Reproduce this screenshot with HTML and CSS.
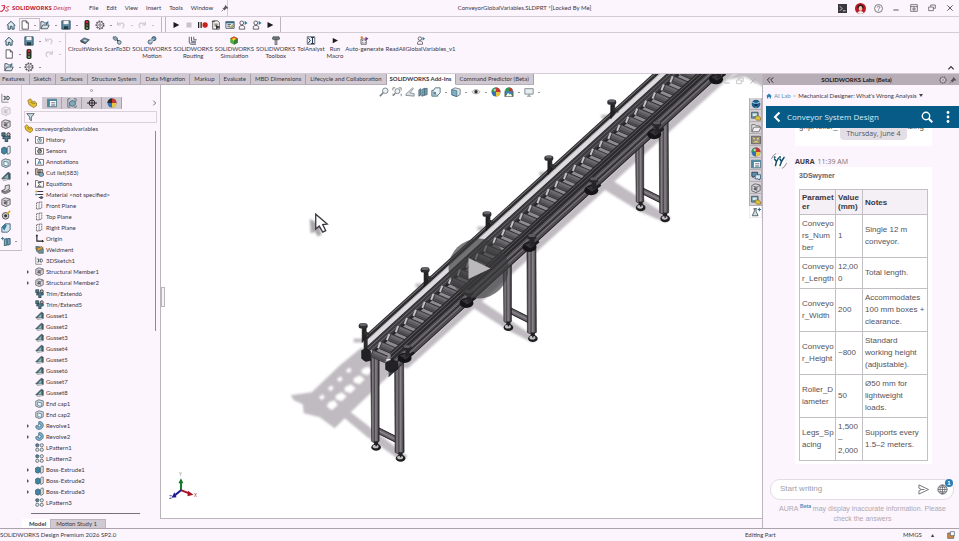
FILE: index.html
```html
<!DOCTYPE html>
<html lang="en">
<head>
<meta charset="utf-8">
<title>SOLIDWORKS Design</title>
<link rel="stylesheet" href="styles.css">
</head>
<body>
<svg class="sprite" aria-hidden="true">
  <defs>
    <symbol id="home" viewBox="0 0 12 12"><path d="M1 6.5 6 1.5l5 5M2.500 6v5h2.700V7.500h2v3.500h2.500V6" fill="#dceaf0" stroke="#2f4f60" stroke-width="1.200"/></symbol>
    <symbol id="page" viewBox="0 0 12 12"><path d="M2.500 1h5L10 3.500V11H2.500zM7.500 1v2.500H10" fill="#fff" stroke="#444" /></symbol>
    <symbol id="open" viewBox="0 0 12 12"><path d="M1 10.500V2h3l1 1.500h3V6M1 10.500 3.500 6H11l-2 4.500z" fill="#d9e2e8" stroke="#3b4a55"/><path d="M7 3.500 10 1v4z" fill="#257a9c"/></symbol>
    <symbol id="save" viewBox="0 0 12 12"><path d="M1 1h10v10H1z" fill="#5d8ba1" stroke="#2d4a5a"/><path d="M3 1h6v4H3z" fill="#f4f4f4"/><path d="M3.500 7.500h5V11h-5z" fill="#223845"/></symbol>
    <symbol id="light" viewBox="0 0 12 12"><rect x="3" y="0" width="6" height="12" rx="2" fill="#2c2a2a"/><circle cx="6" cy="2.500" r="1.500" fill="#d5302c"/><circle cx="6" cy="6" r="1.300" fill="#6a6335"/><circle cx="6" cy="9.500" r="1.400" fill="#49a34c"/></symbol>
    <symbol id="gear" viewBox="0 0 12 12"><circle cx="6" cy="6" r="4.500" fill="none" stroke="#5a565c" stroke-width="1.800" stroke-dasharray="2 1.140"/><circle cx="6" cy="6" r="3.700" fill="#fbf5fc" stroke="#5a565c" stroke-width=".8"/><circle cx="6" cy="6" r="1.500" fill="none" stroke="#5a565c"/></symbol>
    <symbol id="undo" viewBox="0 0 12 12"><path d="M2 2v4h4M2 6c2-3.500 8-3 7.500 1.200L8 10" fill="none" stroke="#cfc8d0" stroke-width="1.300"/></symbol>
    <symbol id="redo" viewBox="0 0 12 12"><path d="M10 2v4H6M10 6C8 2.500 2 3 2.500 7.200L4 10" fill="none" stroke="#cfc8d0" stroke-width="1.300"/></symbol>
    <symbol id="play" viewBox="0 0 12 12"><path d="M3 2.500 10 6 3 9.500z" fill="#1d1b1e"/></symbol>
    <symbol id="stop" viewBox="0 0 12 12"><path d="M3 3h6v6H3z" fill="#c8c2ca"/></symbol>
    <symbol id="record" viewBox="0 0 12 12"><path d="M0 2.500h1.500v7H0zM3 2.500h1.500v7H3z" fill="#222"/><circle cx="8.500" cy="6" r="3.200" fill="#cb1f1a"/></symbol>
    <symbol id="macro-new" viewBox="0 0 12 12"><path d="M2 1h6l2 2v8H2z" fill="#f3f0e8" stroke="#444"/><path d="M1 2h4M4 5h4M4 7h3" stroke="#444"/><path d="m6 6 5 2.500L6 11z" fill="#333"/></symbol>
    <symbol id="macro-edit" viewBox="0 0 12 12"><path d="M1 2h10v8H1z" fill="#e4eef3" stroke="#3a5567"/><path d="M1 2h10v2H1z" fill="#3a6d88"/><path d="M3 5.500h4M3 7.500h3" stroke="#444"/><path d="m6 9 4-4 1.500 1.500-4 4z" fill="#cba24e" stroke="#555" stroke-width=".5"/></symbol>
    <symbol id="person" viewBox="0 0 12 12"><circle cx="4.500" cy="3.500" r="2.300" fill="none" stroke="#4c4850"/><path d="M1.500 11V8.500C1.500 6 8 6 8 8.500V11z" fill="none" stroke="#4c4850"/><path d="m8 1 3.500 2.500L8 6z" fill="#2f7c97"/></symbol>
    <symbol id="circuit" viewBox="0 0 12 12"><path d="m0 6 5-3.500 7 2.500-5 5z" fill="#607f90" stroke="#29414e" stroke-width=".8"/><path d="m3.500 6 2-1.500 3 1.200-2 1.800z" fill="#c9dde4"/><path d="M0 6v2l7 3V10" fill="#333"/></symbol>
    <symbol id="scan" viewBox="0 0 12 12"><path d="M1 1h4l2 3-3 2-3-2z" fill="#8aa7b4" stroke="#2c4552" stroke-width=".8"/><path d="m6 5 2 2" stroke="#222" stroke-width="1.500"/><circle cx="9" cy="8.500" r="2.500" fill="#b5cbd3" stroke="#2c4552"/></symbol>
    <symbol id="motion" viewBox="0 0 12 12"><circle cx="3.500" cy="8" r="2.800" fill="#9cc6d8" stroke="#345"/><circle cx="8.500" cy="3.500" r="2.800" fill="#5d91aa" stroke="#345"/><path d="m4 8 4.500-4.500" stroke="#fff" stroke-width="1.200"/></symbol>
    <symbol id="routing" viewBox="0 0 12 12"><path d="M1 1v7c0 2 1 3 3 3h6M4 1v6h6M7 1v4h4M3 9h7" fill="none" stroke="#4b5660" stroke-width="1.200"/></symbol>
    <symbol id="simulation" viewBox="0 0 12 12"><path d="m1 3 5-2.500L11 3v6l-5 2.500L1 9z" fill="#4caf3f"/><path d="M1 3 6 .5 11 3 6 6z" fill="#e0352b"/><path d="m3 4 3-2 3 2-3 3z" fill="#f4cf29"/><path d="M6 6v5.500L11 9V3z" fill="#3a7d38"/></symbol>
    <symbol id="toolbox" viewBox="0 0 12 12"><path d="M2 1h8l1 3-2 1H3L1 4z" fill="#6b7980" stroke="#262c30" stroke-width=".7"/><path d="M4.700 5h2.600v7H4.700z" fill="#aab4b9" stroke="#333" stroke-width=".7"/></symbol>
    <symbol id="tol" viewBox="0 0 12 12"><path d="M1 1h10v10H1z" fill="#eef3f5" stroke="#3d4a52"/><path d="M8 2v8M6 2h4M6 10h4M2 2l3 4-3 4" stroke="#235" fill="none" stroke-width="1.300"/></symbol>
    <symbol id="auto" viewBox="0 0 12 12"><path d="M2 4h7v7H2z" fill="#eee" stroke="#444"/><path d="M3.500 6H5m2 0h1M3.500 9H5m2 0h1" stroke="#335"/><circle cx="3" cy="2" r="1.600" fill="#e07d2c"/><path d="m8 1 4 2.500L8 6z" fill="#6e2c87"/></symbol>
    <symbol id="pin" viewBox="0 0 12 12"><path d="m6 1 5 5-1 1-1.500-.5L6 8.500 6 10 2 6l1.500.2L6 3.500z" fill="#59535c"/><path d="m4 8-3 3" stroke="#59535c"/></symbol>
    <symbol id="mag" viewBox="0 0 12 12"><circle cx="7.500" cy="4.500" r="3.300" fill="#e8f0f3" stroke="#6f7a80"/><path d="m5 7-4 4" stroke="#6f7a80" stroke-width="1.800"/></symbol>
    <symbol id="magbox" viewBox="0 0 12 12"><path d="M1 4V1h3M8 1h3v3M11 8v3M1 8v1" stroke="#777" fill="none"/><circle cx="6.500" cy="5" r="3" fill="#edf3f5" stroke="#6f7a80"/><path d="m4 7.500-3 3" stroke="#6f7a80" stroke-width="1.600"/></symbol>
    <symbol id="brush" viewBox="0 0 12 12"><path d="M1 10c0-3 3-4 4-5l4-4 1 1-4 5 5 1v3z" fill="#d7dfe3" stroke="#7c868c"/></symbol>
    <symbol id="section" viewBox="0 0 12 12"><path d="M1 3.500 3 2v8L1 11zM4.500 3 8 1.500V10l-3.500 1zM8 2l3-.5V9l-3 1" fill="#74a1b5" stroke="#3c5665" stroke-width=".8"/></symbol>
    <symbol id="views" viewBox="0 0 12 12"><path d="M1 4h7v7H1z" fill="#b9d0da" stroke="#4a6675"/><path d="m3 4 2-3h6v6L8 10" fill="#ecf2f5" stroke="#4a6675"/><path d="M3 6h3v3H3z" fill="#5a8aa0"/></symbol>
    <symbol id="cube" viewBox="0 0 12 12"><path d="m1 3 4-2 6 1.500V9l-4 2.500L1 9.500z" fill="#dfe6e9" stroke="#5a6b74" stroke-width=".9"/><path d="m1 3 6 1.500v7L1 9.500z" fill="#7db0c6" stroke="#3f6576" stroke-width=".8"/></symbol>
    <symbol id="greycube" viewBox="0 0 12 12"><path d="m1 3 4-2 6 1.500V9l-5 2.500L1 9.500z" fill="#d8d5d9" stroke="#5d5a60"/><path d="m3 4 4 1v5M7 5l3.500-2" fill="none" stroke="#5d5a60"/><circle cx="5" cy="7" r="1.800" fill="#63606a"/></symbol>
    <symbol id="endcap" viewBox="0 0 12 12"><path d="m1 3 4-2 6 1.500V9l-5 2.500L1 9.500z" fill="#c9dbe3" stroke="#5d6468"/><path d="m3.500 4 5 1v5l-5-1.500z" fill="#f6f8f9" stroke="#4f7f94"/></symbol>
    <symbol id="eye" viewBox="0 0 12 12"><path d="M1 6c2.500-4 7.500-4 10 0-2.500 3-7.500 3-10 0z" fill="#e6e6e8" stroke="#aaa6ae"/><circle cx="6" cy="5.700" r="2" fill="#333"/></symbol>
    <symbol id="ball" viewBox="0 0 12 12"><circle cx="6" cy="6" r="5.400" fill="#3270b8"/><path d="M6 6V.6A5.400 5.400 0 0 1 11.400 6z" fill="#c9362d"/><path d="M6 6h5.400A5.400 5.400 0 0 1 6 11.400z" fill="#e8c63b"/><path d="M6 6H.6A5.400 5.400 0 0 1 6 .6z" fill="#37984a"/><circle cx="4.500" cy="3.500" r="1.500" fill="#fff" opacity=".6"/></symbol>
    <symbol id="darkball" viewBox="0 0 12 12"><use href="#ball"/><path d="M6 6H.6A5.400 5.400 0 0 1 6 .6z" fill="#2e2931"/></symbol>
    <symbol id="scene" viewBox="0 0 12 12"><path d="M1 5h10v6.500H1z" fill="#5b7a56" stroke="#3e3e3e" stroke-width=".6"/><circle cx="6" cy="5" r="4.500" fill="#3f7fb9"/><path d="M6 5V.5A4.500 4.500 0 0 1 10.500 5z" fill="#c9362d"/><path d="M6 5H1.500A4.500 4.500 0 0 1 6 .5z" fill="#37984a"/><path d="m2 11 3-4 2 2 1-1 2 3z" fill="#efe"/></symbol>
    <symbol id="monitor" viewBox="0 0 12 12"><path d="M1 2h10v6.500H1z" fill="#e7eef1" stroke="#757b80"/><path d="M6 8.500V11M3.500 11h5" stroke="#757b80"/></symbol>
    <symbol id="part" viewBox="0 0 12 12"><path d="M1 3 4 1l2 2v2l3-1 2.500 2v3L8 11.500 2.500 8z" fill="#e9c232" stroke="#7a5f14" stroke-width=".8"/><path d="M4 4.500 7 7l3.500-1" fill="none" stroke="#8b6d19" stroke-width=".8"/></symbol>
    <symbol id="props" viewBox="0 0 12 12"><path d="M.5 1.500h11v9H.5z" fill="#fff" stroke="#3c6a80"/><path d="M.5 1.500h11v2H.5zM.5 3h3v7.500h-3z" fill="#4f87a0"/><path d="M5 5.500h5M5 7.500h5M5 9.300h5" stroke="#456" stroke-width=".8"/></symbol>
    <symbol id="config" viewBox="0 0 12 12"><path d="M4 1H1v10h3M8 1h3v3M11 9v2H8" fill="none" stroke="#4c6773"/><path d="m3 5 3-2 4 1v4l-3 2-4-1z" fill="#7fa9bc" stroke="#334e5b" stroke-width=".8"/></symbol>
    <symbol id="cross" viewBox="0 0 12 12"><circle cx="6" cy="6" r="3.500" fill="none" stroke="#28262a" stroke-width="1.200"/><path d="M6 0v12M0 6h12" stroke="#28262a" stroke-width="1.200"/></symbol>
    <symbol id="filter" viewBox="0 0 12 12"><path d="M1 1.500h10L7.200 6v5L5 9.500V6z" fill="#c6dbe4" stroke="#444c52"/></symbol>
    <symbol id="folder" viewBox="0 0 12 12"><path d="M.7 11V2h3l1 1.300h6.600V11z" fill="#fff" stroke="#4f4b52"/></symbol>
    <symbol id="history" viewBox="0 0 12 12"><use href="#folder"/><circle cx="6" cy="7" r="2.500" fill="none" stroke="#356a80"/><path d="M6 5.500V7h1.500" stroke="#333" fill="none"/></symbol>
    <symbol id="sensors" viewBox="0 0 12 12"><use href="#folder"/><circle cx="6" cy="7" r="2.600" fill="#aaa" stroke="#333"/><path d="m6 7 2-2" stroke="#111"/></symbol>
    <symbol id="annot" viewBox="0 0 12 12"><use href="#folder"/><path d="m3.700 10 2.300-5.500 2.300 5.500M4.700 8h2.600" fill="none" stroke="#2b6c95" stroke-width="1.100"/></symbol>
    <symbol id="sigma" viewBox="0 0 12 12"><use href="#folder"/><path d="M8.200 5.500V4.700H3.900L6 7.200 3.900 9.700h4.300V9" fill="none" stroke="#333"/></symbol>
    <symbol id="cut" viewBox="0 0 12 12"><path d="M.7 9V1h3l1 1h5.500v7z" fill="#cbb9a4" stroke="#4f4b52"/><path d="M3 4h5M3 6h5" stroke="#333"/><path d="m5 7 3-1.500L11.500 7v3L8.500 11.700 5 10z" fill="#7fa4b5" stroke="#334" stroke-width=".7"/></symbol>
    <symbol id="material" viewBox="0 0 12 12"><path d="M3 2h8M3 6h8M5 10h6" stroke="#3a383c" stroke-width="1.300"/><circle cx="1.500" cy="2" r="1.200" fill="#caa236"/><circle cx="1.500" cy="6" r="1.200" fill="#4485a3"/><circle cx="8.500" cy="10" r="2" fill="#555"/></symbol>
    <symbol id="plane" viewBox="0 0 12 12"><path d="m2 2.500 7-1.500v8.500L2 11z" fill="#fdf9fd" stroke="#56525a" stroke-dasharray="2.500 .8"/><path d="M5.500 1v10" stroke="#56525a" stroke-width=".7"/></symbol>
    <symbol id="origin" viewBox="0 0 12 12"><path d="M2.500 1v8.500H11" fill="none" stroke="#222" stroke-width="1.500"/><path d="m.8 3 1.700-2.500L4.200 3zM9.500 7.800 12 9.500l-2.500 1.700z" fill="#222"/></symbol>
    <symbol id="weld" viewBox="0 0 12 12"><path d="M1 2h4l6 3v6H5L2 8z" fill="#6f93a4" stroke="#384b55" stroke-width=".8"/><path d="m1 5 8-3 2 2-6 4z" fill="#d1a141" stroke="#5d4720" stroke-width=".7"/></symbol>
    <symbol id="sketch3d" viewBox="0 0 12 12"><path d="M1 1v10h8" fill="none" stroke="#777"/><path d="M3 4h2v4H3M4 6h1M7 4v4h1.500c2 0 2-4 0-4z" fill="none" stroke="#29363d"/></symbol>
    <symbol id="trim" viewBox="0 0 12 12"><path d="M1 1h4v4H1zM3 5h8v3H8v4H5V8H2z" fill="#4e7f93" stroke="#22353e" stroke-width=".9"/><circle cx="9" cy="3" r="2" fill="#bbb" stroke="#222"/></symbol>
    <symbol id="gusset" viewBox="0 0 12 12"><path d="m1 9 7.500-7.500L11 3v7l-8 1z" fill="#42616c" stroke="#333f44" stroke-width=".8"/><path d="m3.500 8.500 5-5v5z" fill="#8fb8b9"/><path d="M1 9.500 8 9l3 1-8 1.500z" fill="#c7c7ca"/></symbol>
    <symbol id="revolve" viewBox="0 0 12 12"><path d="M5 1c3-1 6 1.500 6 5s-4 6-7 5-3.500-3-2.500-5L5 7z" fill="#82b7cd" stroke="#356075"/><circle cx="6" cy="6" r="2" fill="#e7f2f6" stroke="#356075"/></symbol>
    <symbol id="pattern" viewBox="0 0 12 12"><g fill="#e3e9eb" stroke="#37454c" stroke-width=".9"><rect x="1" y="1" width="4" height="4" rx="1.500" fill="#51899f"/><rect x="7" y="1" width="4" height="4" rx="1.500"/><rect x="1" y="7" width="4" height="4" rx="1.500"/><rect x="7" y="7" width="4" height="4" rx="1.500"/></g></symbol>
    <symbol id="boss" viewBox="0 0 12 12"><path d="m.8 4 3-1.500L7 4v5L4 11 .8 9.500z" fill="#3f88a5" stroke="#23424f" stroke-width=".8"/><path d="M7.500 3 8.500 1.500H11v8L8.500 11h-1z" fill="#dde7eb" stroke="#46545b" stroke-width=".9"/></symbol>
    <symbol id="globe" viewBox="0 0 12 12"><circle cx="6" cy="6" r="5.200" fill="#1f5d8c"/><path d="M1.500 4 6 5.500 10.500 4M6 5.500V11" stroke="#a7d5ef" stroke-width="1.200" fill="none"/><path d="m4 7 2-2 2 2-2 3z" fill="#102f55"/></symbol>
    <symbol id="library" viewBox="0 0 12 12"><path d="M.5 1.500h8v7h-8z" fill="#6f98aa" stroke="#47555c"/><path d="M2 3h5v3H2z" fill="#dceaf0"/><path d="M5 6h4l2.500 2v3H7L5 9z" fill="#e0c03c" stroke="#6d5b18" stroke-width=".7"/></symbol>
    <symbol id="palette" viewBox="0 0 12 12"><path d="M.5 1.500h11v9H.5z" fill="#8f8b85" stroke="#5e5a5d"/><path d="m2 3 3 1-1 2zM10 3 7 4l1 3zM2 9l4-2 4 2z" fill="#f0d35c"/></symbol>
    <symbol id="chat" viewBox="0 0 12 12"><path d="M1 1.500h7v5H4L2.500 8V6.500H1z" fill="#5c94ad" stroke="#335"/><path d="M5 4.500h6.500v5H10V11L8.500 9.500H5z" fill="#d6e7ee" stroke="#357"/></symbol>
    <symbol id="flask" viewBox="0 0 12 12"><path d="M3 2h4M4 2v3L1.500 10.500h7L6 5V2" fill="#cfe0e7" stroke="#444d55"/><path d="M10 1v4M8 3h4" stroke="#2b6c95" stroke-width="1.300"/></symbol>
    <symbol id="restore" viewBox="0 0 12 12"><path d="M4 4V1.500h7v5H8.500M1 4.500h7v5.500H1z" fill="none" stroke="currentColor"/></symbol>
    <symbol id="min" viewBox="0 0 12 12"><path d="M2 9h8" stroke="currentColor" stroke-width="1.300"/></symbol>
    <symbol id="close" viewBox="0 0 12 12"><path d="m2 2 8 8M10 2l-8 8" stroke="currentColor" stroke-width="1.300"/></symbol>
    <symbol id="tile" viewBox="0 0 12 12"><path d="M1 1h10v10H1zM1 4h10M6 4v7M3 7.500h6" fill="none" stroke="currentColor"/></symbol>

    <linearGradient id="tube"><stop offset="0" stop-color="#2c2a2d"/><stop offset=".25" stop-color="#858086"/><stop offset=".45" stop-color="#4b484c"/><stop offset=".6" stop-color="#8a858b"/><stop offset=".8" stop-color="#625e63"/><stop offset="1" stop-color="#242225"/></linearGradient>
    <filter id="soft" x="-10%" y="-10%" width="120%" height="120%"><feGaussianBlur stdDeviation="1.300"/></filter>
    <g id="foot"><path d="M-2-6h4v5h-4z" fill="#222"/><ellipse cy="0" rx="4.800" ry="3.600" fill="#1f1e20"/><ellipse cx="-.5" cy="-.8" rx="3" ry="1.800" fill="#c4c0c5"/><path d="M0-4v3" stroke="#222" stroke-width="1.500"/></g>
    <g id="legs">
      <path d="m376 427 22 11v6l-22-11z" fill="#6a666b" stroke="#1c1b1d"/><path d="m376 430 22 11" stroke="#a29da3" stroke-width=".8"/>
      <path d="M371 352h8.500v90l-4 2-3.500-2z" fill="url(#tube)" stroke="#1c1b1d" stroke-width=".6"/>
      <path d="M395 362h9l.5 91-5 2-4-2z" fill="url(#tube)" stroke="#1c1b1d" stroke-width=".6"/>
      <use href="#foot" x="376.500" y="448"/><use href="#foot" x="401" y="459"/>
    </g>
    <g id="backpost"><path d="M-1.500-3h4V8l-4 5z" fill="#242326" stroke="#111" stroke-width=".6"/><path d="m1 1 5 3v3l-5-2z" fill="#333"/><rect x="-5" y="-6" width="9" height="5" rx="2" fill="#2f2e31"/><ellipse cx="-.5" cy="-5" rx="3.600" ry="1.500" fill="#66626a"/></g>
    <g id="clamp"><ellipse cx="-2" cy="5.500" rx="7" ry="5" fill="#151416"/><path d="m-7 3 6-2 5 2-5 4z" fill="#353338"/><path d="M-1-4h4V3l-4 2z" fill="#242326"/><path d="m3 1 4-2 1 2-4 3z" fill="#1b1a1c"/><rect x="-4" y="-7" width="9" height="5" rx="2" fill="#28272a"/><ellipse cx=".5" cy="-6" rx="3.600" ry="1.500" fill="#5c5960"/></g>
    <g id="roller"><path d="m-6.500-3 14 6" stroke="#29282a" stroke-width="8"/><path d="m-6.500-3 14 6" stroke="#5d5b60" stroke-width="6.500"/><path d="m-5.500-4.500 13.500 5.700" stroke="#706d73" stroke-width="1.500"/><path d="m-7-1 13 5.500" stroke="#49474c" stroke-width="1.500"/><path d="m-8-6.500 2.200.8-2.600 6.200-2-1z" fill="#c6c3c7"/><path d="m-5.800-5.700-2.600 6.200" stroke="#222" stroke-width=".6"/></g>
    <g id="rollers4"><use href="#roller" x="26.640" y="-24.200"/><use href="#roller" x="17.760" y="-16.140"/><use href="#roller" x="8.880" y="-8.070"/><use href="#roller"/></g>
  </defs>
</svg>

<header class="titlebar">
  <div class="menu">
    <svg class="ds" viewBox="0 0 14 12" aria-hidden="true"><path d="M2 2h4c2 0 1 2-1 2.500C8 5 5 10 0 10M7 9c4 2 6-1 3.500-2.500C8 5 9 3 13 3.500M6 1c2 3-2 8-4 10" fill="none" stroke="#c8283a" stroke-width="1.300"/></svg>
    <strong class="brand">SOLIDWORKS <em>Design</em></strong>
    <button>File</button><button>Edit</button><button>View</button><button>Insert</button><button>Tools</button><button>Window</button>
    <button aria-label="Pin menu"><svg class="i8"><use href="#pin"/></svg></button>
  </div>
  <h1>ConveyorGlobalVariables.SLDPRT *[Locked By Me]</h1>
  <div class="window-tools">
    <button aria-label="Console"><svg class="i10" viewBox="0 0 12 12"><path d="M0 0h12v12H0z" fill="#3a383d"/><path d="m2.500 3 3 3-3 3M6.500 9h3.500" stroke="#fff" fill="none"/></svg></button>
    <button aria-label="Account"><svg class="i11" viewBox="0 0 12 12"><circle cx="6" cy="6" r="6" fill="#b81b25"/><path d="M2.500 6c0-6 7-6 7 0z" fill="#2a1416"/><ellipse cx="6" cy="6" rx="2" ry="2.600" fill="#f0c5ad"/><path d="M2.500 11c1-3 6-3 7 0-2 1.300-5 1.300-7 0z" fill="#f3e9e9"/></svg></button>
    <button aria-label="Help"><svg class="i10" viewBox="0 0 12 12"><circle cx="6" cy="6" r="5.300" fill="none" stroke="#555"/><path d="M4.300 4.700c0-2.400 3.600-2.200 3.400 0C7.600 6 6 5.900 6 7.500M6 8.500v1.200" fill="none" stroke="#555"/></svg></button>
    <button aria-label="Minimize"><svg class="i8"><use href="#min"/></svg></button>
    <button aria-label="Arrange"><svg class="i8"><use href="#tile"/></svg></button>
    <button aria-label="Restore"><svg class="i8"><use href="#restore"/></svg></button>
    <button aria-label="Close"><svg class="i8"><use href="#close"/></svg></button>
  </div>
</header>

<div class="quickbar">
  <div class="quick file-tools">
    <button aria-label="Home"><svg><use href="#home"/></svg></button>
    <button class="boxed dd" aria-label="New"><svg><use href="#page"/></svg></button>
    <button class="dd" aria-label="Open"><svg><use href="#open"/></svg></button>
    <button class="dd" aria-label="Save"><svg><use href="#save"/></svg></button>
    <button aria-label="Rebuild"><svg><use href="#light"/></svg></button>
    <button class="dd" aria-label="Options"><svg><use href="#gear"/></svg></button>
    <button class="dd off" aria-label="Undo"><svg><use href="#undo"/></svg></button>
    <button class="dd off" aria-label="Redo"><svg><use href="#redo"/></svg></button>
  </div>
  <div class="quick macro-tools">
    <button aria-label="Run"><svg><use href="#play"/></svg></button>
    <button aria-label="Stop"><svg><use href="#stop"/></svg></button>
    <button aria-label="Record"><svg><use href="#record"/></svg></button>
    <button aria-label="New macro"><svg><use href="#macro-new"/></svg></button>
    <button aria-label="Edit macro"><svg><use href="#macro-edit"/></svg></button>
    <button aria-label="User macro"><svg><use href="#person"/></svg></button>
    <button aria-label="Shared macro"><svg><use href="#person"/></svg></button>
    <button aria-label="Run macro"><svg><use href="#play"/></svg></button>
  </div>
</div>

<div class="ribbon">
  <div class="ribbon-file">
    <button aria-label="Home"><svg><use href="#home"/></svg></button>
    <button class="dd" aria-label="Save"><svg><use href="#save"/></svg></button>
    <button class="dd off" aria-label="Undo"><svg><use href="#undo"/></svg></button>
    <button class="dd" aria-label="New"><svg><use href="#page"/></svg></button>
    <button aria-label="Rebuild"><svg><use href="#light"/></svg></button>
    <button class="dd off" aria-label="Redo"><svg><use href="#redo"/></svg></button>
    <button class="dd" aria-label="Open"><svg><use href="#open"/></svg></button>
    <button class="dd" aria-label="Options"><svg><use href="#gear"/></svg></button>
  </div>
  <div class="addins">
    <button><svg><use href="#circuit"/></svg>CircuitWorks</button>
    <button><svg><use href="#scan"/></svg>ScanTo3D</button>
    <button><svg><use href="#motion"/></svg>SOLIDWORKS<br>Motion</button>
    <button><svg><use href="#routing"/></svg>SOLIDWORKS<br>Routing</button>
    <button><svg><use href="#simulation"/></svg>SOLIDWORKS<br>Simulation</button>
    <button><svg><use href="#toolbox"/></svg>SOLIDWORKS<br>Toolbox</button>
    <button><svg><use href="#tol"/></svg>TolAnalyst</button>
    <button><svg><use href="#play"/></svg>Run<br>Macro</button>
    <button><svg><use href="#auto"/></svg>Auto-generate</button>
    <button><svg><use href="#person"/></svg>ReadAllGlobalVariables_v1</button>
  </div>
  <button class="collapse" aria-label="Collapse ribbon"><svg class="i8" viewBox="0 0 12 12"><path d="m2 8 4-4 4 4" fill="none" stroke="#333" stroke-width="1.800"/></svg></button>
</div>

<main class="workspace">
  <nav class="tabs">
    <button>Features</button><button>Sketch</button><button>Surfaces</button><button>Structure System</button><button>Data Migration</button><button>Markup</button><button>Evaluate</button><button>MBD Dimensions</button><button>Lifecycle and Collaboration</button><button class="on">SOLIDWORKS Add-Ins</button><button>Command Predictor (Beta)</button>
  </nav>

  <div class="side">
    <div class="side-tools">
      <button aria-label="3D sketch"><svg><use href="#sketch3d"/></svg></button>
      <button class="faded" aria-label="Weldment"><svg><use href="#greycube"/></svg></button>
      <button aria-label="Structural member"><svg><use href="#greycube"/></svg></button>
      <button aria-label="Trim"><svg><use href="#trim"/></svg></button>
      <button aria-label="Extrude"><svg><use href="#boss"/></svg></button>
      <button aria-label="End cap"><svg><use href="#endcap"/></svg></button>
      <button aria-label="Gusset"><svg><use href="#gusset"/></svg></button>
      <button aria-label="Weld bead"><svg viewBox="0 0 12 12"><path d="m1 8 4-2V2l5-1v5l-5 3z" fill="#d9d7db" stroke="#555"/><path d="m1 8 4 2 6-3v2l-6 3-4-2z" fill="#999" stroke="#444" stroke-width=".7"/></svg></button>
      <button aria-label="Cut"><svg><use href="#greycube"/></svg></button>
      <button aria-label="Hole wizard"><svg viewBox="0 0 12 12"><circle cx="5.500" cy="7" r="4" fill="#ccc" stroke="#444"/><circle cx="5.500" cy="7" r="1.800" fill="#333"/><path d="m7 5 4-4" stroke="#d6a936" stroke-width="2"/></svg></button>
      <button aria-label="Chamfer"><svg viewBox="0 0 12 12"><path d="M1 5 5 1h6v7l-3 3H1z" fill="#cfe2ea" stroke="#355a6b"/><path d="M1 5 5 1l2 2-3 6z" fill="#367b9c"/></svg></button>
      <button class="dd" aria-label="Reference geometry"><svg viewBox="0 0 12 12"><path d="M2 1v4M0 3h4" stroke="#2f6f8b"/><path d="M4 4 7 3v8l-3 1zM8 3h3v7l-3 1z" fill="#74abc2" stroke="#356"/></svg></button>
    </div>
    <section class="tree">
      <span class="grip"></span>
      <div class="tree-tabs">
        <button class="on" aria-label="Feature tree"><svg><use href="#part"/></svg></button>
        <button aria-label="Properties"><svg><use href="#props"/></svg></button>
        <button aria-label="Configurations"><svg><use href="#config"/></svg></button>
        <button aria-label="Dimensions"><svg><use href="#cross"/></svg></button>
        <button aria-label="Display"><svg><use href="#darkball"/></svg></button>
        <button class="more" aria-label="More"><svg viewBox="0 0 12 12"><path d="m4 2 4 4-4 4" fill="none" stroke="#444" stroke-width="1.300"/></svg></button>
      </div>
      <div class="filter"><svg><use href="#filter"/></svg><input aria-label="Filter tree"></div>
      <ul class="features">
        <li class="root"><svg><use href="#part"/></svg>conveyorglobalvariables</li>
        <li class="ex"><svg><use href="#history"/></svg>History</li>
        <li><svg><use href="#sensors"/></svg>Sensors</li>
        <li class="ex"><svg><use href="#annot"/></svg>Annotations</li>
        <li class="ex"><svg><use href="#cut"/></svg>Cut list(583)</li>
        <li class="ex"><svg><use href="#sigma"/></svg>Equations</li>
        <li><svg><use href="#material"/></svg>Material &lt;not specified&gt;</li>
        <li><svg><use href="#plane"/></svg>Front Plane</li>
        <li><svg><use href="#plane"/></svg>Top Plane</li>
        <li><svg><use href="#plane"/></svg>Right Plane</li>
        <li><svg><use href="#origin"/></svg>Origin</li>
        <li><svg><use href="#weld"/></svg>Weldment</li>
        <li><svg><use href="#sketch3d"/></svg>3DSketch1</li>
        <li class="ex"><svg><use href="#greycube"/></svg>Structural Member1</li>
        <li class="ex"><svg><use href="#greycube"/></svg>Structural Member2</li>
        <li><svg><use href="#trim"/></svg>Trim/Extend6</li>
        <li><svg><use href="#trim"/></svg>Trim/Extend5</li>
        <li><svg><use href="#gusset"/></svg>Gusset1</li>
        <li><svg><use href="#gusset"/></svg>Gusset2</li>
        <li><svg><use href="#gusset"/></svg>Gusset3</li>
        <li><svg><use href="#gusset"/></svg>Gusset4</li>
        <li><svg><use href="#gusset"/></svg>Gusset5</li>
        <li><svg><use href="#gusset"/></svg>Gusset6</li>
        <li><svg><use href="#gusset"/></svg>Gusset7</li>
        <li><svg><use href="#gusset"/></svg>Gusset8</li>
        <li><svg><use href="#endcap"/></svg>End cap1</li>
        <li><svg><use href="#endcap"/></svg>End cap2</li>
        <li class="ex"><svg><use href="#revolve"/></svg>Revolve1</li>
        <li class="ex"><svg><use href="#revolve"/></svg>Revolve2</li>
        <li><svg><use href="#pattern"/></svg>LPattern1</li>
        <li><svg><use href="#pattern"/></svg>LPattern2</li>
        <li class="ex"><svg><use href="#boss"/></svg>Boss-Extrude1</li>
        <li class="ex"><svg><use href="#boss"/></svg>Boss-Extrude2</li>
        <li class="ex"><svg><use href="#boss"/></svg>Boss-Extrude3</li>
        <li><svg><use href="#pattern"/></svg>LPattern3</li>
      </ul>
      <span class="hscroll"></span>
    </section>
  </div>

  <section class="viewport">
    <svg class="model" viewBox="161 74 602 445" preserveAspectRatio="xMidYMid slice" role="img" aria-label="Conveyor model">
      <g fill="#b9b4ba" filter="url(#soft)" opacity=".9">
        <path fill-rule="evenodd" d="M362 348 340 366 312 393 291 396 294 401 303 405 304 414 320 418 335 429 345 419 368 438 402 462 408 457 351 413 400 366zM329 403l6-2 3 5-6 5-5-4zM336 396l6-3 5 4-5 5-6-2zM345 388l6-3 5 4-5 5-6-2zM354 379l6-3 5 4-5 5-6-2zM362 370l6-3 5 4-5 5-6-2zM319 398l4-3 2 3-3 3zM328 389l4-3 2 3-3 3zM337 380l4-3 2 3-3 3zM346 371l4-3 2 3-3 3z"/>
        <path d="m470 306 8-7 60 40-5 4-24-12z"/>
        <path d="m602 188 10-8 60 38-6 5-25-11z"/>
        <path d="M400 367 740 57v12L408 369z"/>
        <path d="m728 80 12-8 26-2v18l-20-11z"/>
        <path d="M354 339h12v4h-12zM416 284h10v4h-10zM478 227h10v4h-10zM540 172h10v4h-10zM602 115h10v4h-10z"/>
      </g>
      <use href="#legs"/><use href="#legs" x="132.500" y="-120"/><use href="#legs" x="265" y="-240"/>
      <g transform="matrix(1 -.91 0 1 0 509.600)">
        <path d="M364 159h386v24H364z" fill="#2c2b2e"/>
        <path d="M364 161h386" stroke="#8a858b"/>
        <path d="M368 165h382v6.500H368z" fill="#dedcde"/>
        <path d="M370 165.500h380" stroke="#a5a2a6"/>
        <path d="M364 172.500h386v10H364z" fill="#3b3a3d"/>
        <path d="M364 175h386M364 179h386" stroke="#757278" stroke-width=".8"/>
        <path d="M368 183h382v26H394z" fill="#8f8b90"/>
        <path d="M368 182h382v3H368z" fill="#262528"/>
      </g>
      <g>
        <use href="#rollers4" x="698.400" y="66.500"/><use href="#rollers4" x="662.900" y="98.800"/><use href="#rollers4" x="627.400" y="131.100"/><use href="#rollers4" x="591.900" y="163.400"/><use href="#rollers4" x="556.400" y="195.600"/><use href="#rollers4" x="520.900" y="227.900"/><use href="#rollers4" x="485.400" y="260.200"/><use href="#rollers4" x="449.900" y="292.400"/><use href="#rollers4" x="414.500" y="324.700"/><use href="#rollers4" x="379" y="357"/>
      </g>
      <g transform="matrix(1 -.91 0 1 0 509.600)">
        <path d="M391 198.500h359v11H391z" fill="#2b2a2c"/>
        <path d="M391 201h359M391 205h359" stroke="#69666c" stroke-width=".9"/>
        <path d="M389 209h361v13H389z" fill="#504d52"/>
        <path d="M389 211.500h361M389 217h361" stroke="#858187" stroke-width="1"/>
        <path d="M389 214.500h361M389 221.500h361" stroke="#222124" stroke-width="1.200"/>
      </g>
      <path d="m362 351 5-2 4 3v9l-5 1-4-3zM386 363l7-3 5 3v7l-7 3-5-3z" fill="#222124" stroke="#0f0f10" stroke-width=".6"/>
      <use href="#backpost" x="364" y="330"/><use href="#backpost" x="426" y="274"/><use href="#backpost" x="488" y="218"/><use href="#backpost" x="550" y="162"/><use href="#backpost" x="613" y="106"/>
      <use href="#clamp" x="407" y="353"/><use href="#clamp" x="469" y="298"/><use href="#clamp" x="532" y="242"/><use href="#clamp" x="594" y="185"/><use href="#clamp" x="657" y="129"/><use href="#clamp" x="719" y="74"/>
      <circle cx="479" cy="269" r="30" fill="#3a393b" opacity=".66"/><path d="m469 258.500 22 10.500-22 10.500z" fill="#bcb9bc"/>
      <g stroke-width="2"><path d="M181 491v-10" stroke="#147a2b"/><path d="m178.500 484 2.500-5 2.500 5z" fill="#147a2b"/><path d="m181 491 10 4" stroke="#a5142a"/><path d="m188 491.500 5.500 4-6 1.500z" fill="#a5142a"/><path d="m181 491-6 5" stroke="#1c1a8f"/><path d="m174.500 493 2 5-5 .5z" fill="#1c1a8f"/></g>
      <g class="axes"><text x="179" y="477">Y</text><text x="194" y="498" class="x">X</text><text x="169" y="500" class="z">Z</text></g>
      <path d="m310 219 1 15 4-2 3 5 4-2-2-6 4-2z" fill="#aaa6ac" filter="url(#soft)"/>
      <path d="M316 214.500v15l3.500-3 3.500 6 3-1.500-3-6 4.500-.5z" fill="#fff" stroke="#39363c" stroke-width="1.300"/>
    </svg>
    <div class="view-tools">
      <button aria-label="Zoom to fit"><svg><use href="#mag"/></svg></button>
      <button aria-label="Zoom area"><svg><use href="#magbox"/></svg></button>
      <button aria-label="Previous view"><svg><use href="#brush"/></svg></button>
      <button aria-label="Section"><svg><use href="#section"/></svg></button>
      <button class="dd" aria-label="View orientation"><svg><use href="#views"/></svg></button>
      <button class="dd" aria-label="Display style"><svg><use href="#cube"/></svg></button>
      <button class="dd" aria-label="Hide or show"><svg><use href="#eye"/></svg></button>
      <button aria-label="Appearance"><svg><use href="#ball"/></svg></button>
      <button class="dd" aria-label="Scene"><svg><use href="#scene"/></svg></button>
      <button class="dd" aria-label="View settings"><svg><use href="#monitor"/></svg></button>
    </div>
    <div class="doc-tools">
      <button aria-label="Minimize document"><svg class="i8"><use href="#min"/></svg></button>
      <button aria-label="Restore document"><svg class="i8"><use href="#restore"/></svg></button>
      <button aria-label="Close document"><svg class="i8"><use href="#close"/></svg></button>
    </div>
    <button class="handle" aria-label="Collapse tree"></button>
    <div class="pane-tabs">
      <button aria-label="3DEXPERIENCE"><svg><use href="#globe"/></svg></button>
      <button aria-label="Design library"><svg><use href="#library"/></svg></button>
      <button aria-label="File explorer"><svg viewBox="0 0 12 12"><path d="M1 10.500V2h4l1 1.500h4V5M1 10.500 3.500 5H12l-2.500 5.500z" fill="#f2f0f2" stroke="#666"/></svg></button>
      <button aria-label="View palette"><svg><use href="#palette"/></svg></button>
      <button aria-label="Appearances"><svg><use href="#ball"/></svg></button>
      <button aria-label="Custom properties"><svg><use href="#props"/></svg></button>
      <button aria-label="Forum"><svg><use href="#chat"/></svg></button>
      <button aria-label="Parts"><svg><use href="#greycube"/></svg></button>
      <button aria-label="Marketplace"><svg><use href="#library"/></svg></button>
      <button class="on" aria-label="Labs"><svg><use href="#flask"/></svg></button>
    </div>
  </section>

  <div class="sheet-tabs"><button class="on">Model</button><button>Motion Study 1</button></div>

  <aside class="labs">
    <header class="labs-head">
      <button aria-label="Expand"><svg class="i8" viewBox="0 0 12 12"><path d="M6 2 2 6l4 4M11 2 7 6l4 4" fill="none" stroke="#222" stroke-width="1.400"/></svg></button>
      <h2>SOLIDWORKS Labs (Beta)</h2>
      <button aria-label="Settings"><svg class="i8"><use href="#gear"/></svg></button>
      <button aria-label="Pin"><svg class="i8"><use href="#pin"/></svg></button>
    </header>
    <nav class="crumbs"><svg class="i6" viewBox="0 0 12 12"><path d="M0 6.500 6 1l6 5.500h-2V11H7.500V8h-3v3H2V6.500z" fill="#2a80b4"/></svg><a href="#lab">AI Lab</a><span class="sep">&gt;</span><button class="crumb-menu">Mechanical Designer: What's Wrong Analysis</button></nav>
    <div class="conversation">
      <button aria-label="Back"><svg viewBox="0 0 12 12"><path d="M8.500 1.500 4 6l4.500 4.500" fill="none" stroke="#fff" stroke-width="2"/></svg></button>
      <h3>Conveyor System Design</h3>
      <button aria-label="Search"><svg viewBox="0 0 12 12"><circle cx="5" cy="5" r="3.700" fill="none" stroke="#fff" stroke-width="1.400"/><path d="m7.800 7.800 3.500 3.500" stroke="#fff" stroke-width="2"/></svg></button>
      <button aria-label="More"><svg viewBox="0 0 12 12"><g fill="#fff"><circle cx="6" cy="1.500" r="1.400"/><circle cx="6" cy="6" r="1.400"/><circle cx="6" cy="10.500" r="1.400"/></g></svg></button>
    </div>
    <div class="chat">
      <div class="earlier"><div class="earlier-line"><span>gripRoller_</span><span>sizing</span></div></div>
      <time class="day">Thursday, June 4</time>
      <div class="author">
        <svg class="avatar" viewBox="0 0 18 18" aria-hidden="true"><circle cx="9" cy="9" r="7.200" fill="#fff" stroke="#e2dbe4" stroke-width=".6"/><path d="M1.500 7A8 8 0 0 1 6 1.500M16.500 11a8 8 0 0 1-4.500 5.500" fill="none" stroke="#9a95a0"/><path d="m4.500 7 2 2.500 2-3.500M6.500 9.500l-1 4M10 7l1.500 2.500L14 5.500M11.500 9.500l-1.500 4" fill="none" stroke="#174f6d" stroke-width="1.500" stroke-linecap="round"/><circle cx="4.700" cy="5.300" r="1" fill="#174f6d"/><circle cx="10" cy="5" r="1" fill="#174f6d"/></svg>
        <strong>AURA</strong><time>11:39 AM</time>
      </div>
      <article class="bubble">
        <h4>3DSwymer</h4>
        <table>
          <thead><tr><th class="c1">Parameter</th><th class="c2">Value (mm)</th><th>Notes</th></tr></thead>
          <tbody>
            <tr><td>Conveyors_Number</td><td>1</td><td>Single 12 m conveyor.</td></tr>
            <tr><td>Conveyor_Length</td><td>12,000</td><td>Total length.</td></tr>
            <tr><td>Conveyor_Width</td><td>200</td><td>Accommodates 100 mm boxes + clearance.</td></tr>
            <tr><td>Conveyor_Height</td><td>~800</td><td>Standard working height (adjustable).</td></tr>
            <tr><td>Roller_Diameter</td><td>50</td><td>Ø50 mm for lightweight loads.</td></tr>
            <tr><td>Legs_Spacing</td><td>1,500 – 2,000</td><td>Supports every 1.5–2 meters.</td></tr>
          </tbody>
        </table>
      </article>
    </div>
    <form class="composer">
      <input type="text" placeholder="Start writing" aria-label="Message">
      <button type="button" aria-label="Send"><svg viewBox="0 0 12 12"><path d="m1 1 10.500 5L1 11V7.500M1 4.500V1M1 4.500 4 6 1 7.500M4 6h3" fill="none" stroke="#6f6b73"/></svg></button>
      <button type="button" class="web" aria-label="Web sources"><svg viewBox="0 0 12 12"><circle cx="6" cy="6" r="5" fill="none" stroke="#5c5f66"/><path d="M1 6h10M6 1v10M2 3.500h8M2 8.500h8M6 1C2.500 4 2.500 8 6 11c3.500-3 3.500-7 0-10" fill="none" stroke="#5c5f66" stroke-width=".8"/></svg><span class="badge">1</span></button>
    </form>
    <p class="notice">AURA <sup>Beta</sup> may display inaccurate information. Please check the answers</p>
  </aside>
</main>

<footer class="status">
  <span>SOLIDWORKS Design Premium 2026 SP2.0</span>
  <span class="mode">Editing Part</span>
  <span class="units">MMGS</span><span class="up">▴</span>
  <svg class="i8" viewBox="0 0 12 12"><path d="M1 3h9v8H1z" fill="#d88b3a" stroke="#456"/><path d="M5 1h6v6H5z" fill="#fff" stroke="#456"/></svg>
</footer>
</body>
</html>
```
FILE: styles.css
```css
* { box-sizing: border-box; }

body {
  margin: 0;
  height: 100vh;
  display: grid;
  grid-template-rows: 17px 16px 41px minmax(0, 1fr) 13px;
  grid-template-columns: minmax(0, 1fr);
  overflow: hidden;
  background: #fcf5fd;
  color: #3b363e;
  font: 6px/8px Lato, "Open Sans", sans-serif;
}

button, input { font: inherit; color: inherit; border: 0; padding: 0; margin: 0; background: none; }
button { display: inline-flex; align-items: center; justify-content: center; white-space: nowrap; }
h1, h2, h3, h4, p, ul { margin: 0; padding: 0; font-weight: 400; font-size: inherit; }
svg { display: block; flex: none; width: 10px; height: 10px; }
.sprite { position: absolute; width: 0; height: 0; }
.i6 { width: 6px; height: 6px; }
.i8 { width: 8px; height: 8px; }
.i10 { width: 9px; height: 9px; }
.i11 { width: 11px; height: 11px; }

.dd::after {
  content: "";
  border: 1px solid transparent;
  border-top-color: #333;
  border-bottom: 0;
  margin: 1px 4px 0 5px;
}
.off::after { border-top-color: #999; }

/* Title bar */
.titlebar { display: grid; grid-template-columns: 1fr auto 1fr; align-items: stretch; border-bottom: 1px solid #d3ccd4; }
.titlebar h1 { align-self: center; padding-left: 90px; }
.menu { justify-self: start; display: flex; align-items: center; gap: 8px; width: 228px; border-right: 1px solid #d3ccd4; }
.menu .ds { width: 10px; height: 9px; }
.brand { color: #bd2335; font-family: "Open Sans", sans-serif; font-weight: 700; margin: 0 10px 0 -6px; white-space: nowrap; }
.brand em { font-weight: 400; }
.window-tools { justify-self: end; display: flex; align-items: center; gap: 6px; padding-right: 3px; color: #444; }
.window-tools button { width: 12px; }

/* Quick access */
.quickbar { display: flex; border-bottom: 1px solid #d3ccd4; }
.quick { display: flex; align-items: center; border-right: 1px solid #bdb6be; }
.quick button { height: 13px; }
.file-tools { width: 162px; padding-left: 6px; }
.file-tools button:not(.dd) { margin-right: 3px; }
.boxed { border: 1px solid #c5bec6; }
.boxed::after { margin: 1px 3px 0 4px; }
.macro-tools { margin-left: 3px; padding: 0 5px; border-left: 1px solid #bdb6be; width: 116px; justify-content: space-between; }

/* Ribbon */
.ribbon { display: flex; border-bottom: 1px solid #d3ccd4; }
.ribbon-file { width: 66px; padding: 1px 0 0 4px; display: grid; grid-template-columns: repeat(3, 20px); grid-auto-rows: 13px; border-right: 1px solid #d3ccd4; }
.ribbon-file button { justify-content: start; }
.addins { display: flex; gap: 2px; padding: 3px 2px; align-items: start; }
.addins button { flex-direction: column; line-height: 7px; }
.addins svg { height: 9px; }
.collapse { margin: auto 4px 1px auto; }

/* Workspace */
.workspace {
  display: grid;
  grid-template-columns: 161px minmax(0, 1fr) 196px;
  grid-template-rows: 11px minmax(0, 1fr) 9px;
}
.tabs { grid-area: 1 / 1 / 2 / 3; z-index: 2; justify-self: start; display: flex; }
.tabs button { padding: 0 4px; background: #d0c9d1; border-right: 1px solid #a8a1a9; border-bottom: 1px solid #b7b0b8; }
.tabs button:first-child { padding-left: 2px; }
.tabs .on { background: #fff; border-bottom-color: #fff; font-weight: 700; padding: 0 3px; }
.side { grid-area: 2 / 1 / 3 / 2; display: grid; grid-template-columns: 22px 1fr; border-right: 1px solid #bbb4bc; overflow: hidden; }
.side-tools { display: flex; flex-direction: column; gap: 3px; align-items: start; padding: 8px 0 0 1px; border-right: 1px solid #ddd6de; border-bottom: 1px solid #c5bec6; align-self: start; height: 166px; }
.side-tools .dd::after { margin: 0 0 0 4px; }
.faded { opacity: .35; }

.tree { position: relative; min-width: 0; display: flex; flex-direction: column; }
.grip { align-self: center; width: 3px; height: 3px; border: 1px solid #999; border-radius: 50%; margin: 4px 0 5px; flex: none; }
.tree-tabs { display: flex; height: 12px; flex: none; }
.tree-tabs button { width: 20px; background: #d0c9d1; border-right: 1px solid #aaa3ab; }
.tree-tabs .on, .tree-tabs .more { background: none; border: 0; }
.tree-tabs .more { width: 12px; margin-left: auto; }
.tree-tabs .more svg { width: 7px; height: 8px; }
.filter { display: flex; align-items: center; height: 12px; margin: 2px 3px 0 2px; border: 1px solid #d9d2da; flex: none; }
.filter svg { width: 9px; margin-left: 1px; }
.filter input { flex: 1; min-width: 0; }
.features { list-style: none; flex: 1; min-height: 0; overflow: hidden; margin-right: 5px; }
.features li { display: flex; align-items: center; gap: 2px; height: 11px; padding-left: 13px; position: relative; white-space: nowrap; }
.features .root { padding-left: 2px; }
.features svg { width: 9px; height: 9px; }
.ex::before { content: ""; position: absolute; left: 5px; top: 4px; border: 2px solid transparent; border-left-color: #555; border-right: 0; }
.tree::after { content: ""; position: absolute; right: 4px; top: 46px; width: 1px; height: 200px; background: #8d8790; }
.hscroll { height: 1px; background: #77717a; margin: 4px 20px 5px 9px; flex: none; }

.viewport { grid-area: 1 / 2 / 3 / 3; position: relative; background: #fff; overflow: hidden; border-right: 1px solid #bbb4bc; border-bottom: 1px solid #bbb4bc; }
.model { width: 100%; height: 100%; }
.axes text { font: 5px "Open Sans", sans-serif; fill: #888; }
.axes .x { fill: #a5142a; }
.axes .z { fill: #1c1a8f; }
.view-tools { position: absolute; top: 13px; left: 218px; display: flex; gap: 3px; }
.view-tools .dd::after { margin: 0 1px 0 4px; }
.doc-tools { position: absolute; top: 3px; right: 5px; display: flex; gap: 5px; color: #b4adb5; }
.handle { position: absolute; left: 0; top: 213px; width: 4px; height: 20px; border: 1px solid #bbb4bc; background: #f7f1f8; }
.pane-tabs { position: absolute; right: 0; top: 24px; display: flex; flex-direction: column; }
.pane-tabs button { width: 13px; height: 12px; background: #d6d0d7; border: 1px solid #b4adb5; border-top-width: 0; }
.pane-tabs .on { background: #fff; border-color: #eee8ef; }

.sheet-tabs { grid-area: 3 / 1 / 4 / 3; display: flex; padding-left: 22px; border-right: 1px solid #bbb4bc; }
.sheet-tabs button { padding: 0 8px 0 5px; border: 1px solid #bbb4bc; border-width: 1px 1px 0 0; background: #d0c9d1; }
.sheet-tabs .on { background: #fff; font-weight: 700; border-top: 0; padding: 0 4px 0 7px; }

/* Labs panel */
.labs { grid-area: 1 / 3 / 4 / 4; display: flex; flex-direction: column; min-height: 0; }
.labs-head { display: flex; align-items: center; height: 11px; flex: none; background: #b7adb6; padding: 0 2px 0 3px; gap: 2px; color: #211e23; }
.labs-head h2 { flex: 1; text-align: center; font-weight: 700; }
.crumbs { display: flex; align-items: center; height: 21px; padding-left: 3px; gap: 2px; flex: none; }
.crumbs a { color: #5a93bb; text-decoration: none; }
.crumbs .sep { color: #aaa; }
.crumb-menu::after { content: ""; border: 2px solid transparent; border-top: 3px solid #444; border-bottom: 0; margin-left: 2px; }
.conversation { display: flex; align-items: center; height: 22px; flex: none; margin-left: 3px; padding: 0 5px 0 5px; background: #075c87; color: #fff; }
.conversation h3 { flex: 1; font: 8px/10px "Open Sans", sans-serif; padding-left: 4px; color: #d9ebf4; }
.conversation svg { width: 12px; height: 12px; }
.conversation button + button { margin-left: 9px; }
.chat { flex: 1; min-height: 0; overflow: hidden; padding: 0 27px 0 32px; font-family: "Liberation Sans", Arial, sans-serif; display: flex; flex-direction: column; }
.earlier { background: #fff; height: 18px; flex: none; overflow: hidden; padding: 0 8px 0 4px; }
.earlier-line { display: flex; justify-content: space-between; font-size: 8px; line-height: 12px; margin-top: -7px; color: #555; }
.day { align-self: center; position: relative; margin: -18px 0 0 20px; background: #e3dee5; border-radius: 0 0 4px 4px; padding: 0 6px; font: 7px/12px "Open Sans", sans-serif; color: #555; flex: none; }
.author { display: flex; align-items: center; gap: 3px; height: 18px; margin: 12px 0 -3px -25px; flex: none; font: 7px/9px "Open Sans", sans-serif; }
.avatar { width: 18px; height: 18px; margin-right: 4px; }
.author time { color: #77727a; }
.bubble { background: #fff; padding: 4px 4px 3px; flex: none; }
.bubble h4 { font: 700 7px/9px "Liberation Sans", Arial, sans-serif; color: #66626a; margin-bottom: 9px; }
table { border-collapse: collapse; table-layout: fixed; width: 100%; font-size: 8px; line-height: 12px; color: #55525a; }
th, td { border: 1px solid #c4bfc5; padding: 3px 1px 3px 2px; text-align: left; word-break: break-word; }
th { background: #f4f0f5; line-height: 9px; color: #3b383f; }
.c1 { width: 36px; }
.c2 { width: 27px; }
.composer { display: flex; align-items: center; height: 21px; margin: 14px 5px 0 7px; padding: 0 5px 0 9px; background: #fff; border: 1px solid #e3dce5; border-radius: 10px; flex: none; font: 8px/10px "Liberation Sans", Arial, sans-serif; gap: 8px; }
.composer input { flex: 1; min-width: 0; }
.composer input::placeholder { color: #a29da5; opacity: 1; }
.composer svg { width: 11px; height: 11px; }
.web { position: relative; }
.badge { position: absolute; top: -5px; right: -5px; width: 8px; height: 8px; border-radius: 50%; background: #2b7fb3; color: #fff; font: 700 6px/8px "Liberation Sans", sans-serif; }
.notice { margin: 4px 4px 4px 7px; text-align: center; font: 7px/10px "Liberation Sans", Arial, sans-serif; color: #aea8b0; flex: none; }
.notice sup { color: #3f8fc0; font-size: 5px; line-height: 5px; font-weight: 700; }

/* Status bar */
.status { display: flex; align-items: center; border-top: 1px solid #aaa3ab; padding: 0 4px 1px 0; }
.status .mode { margin-left: auto; width: 158px; }
.status .units { width: 28px; }
.status .up { width: 16px; }
```
